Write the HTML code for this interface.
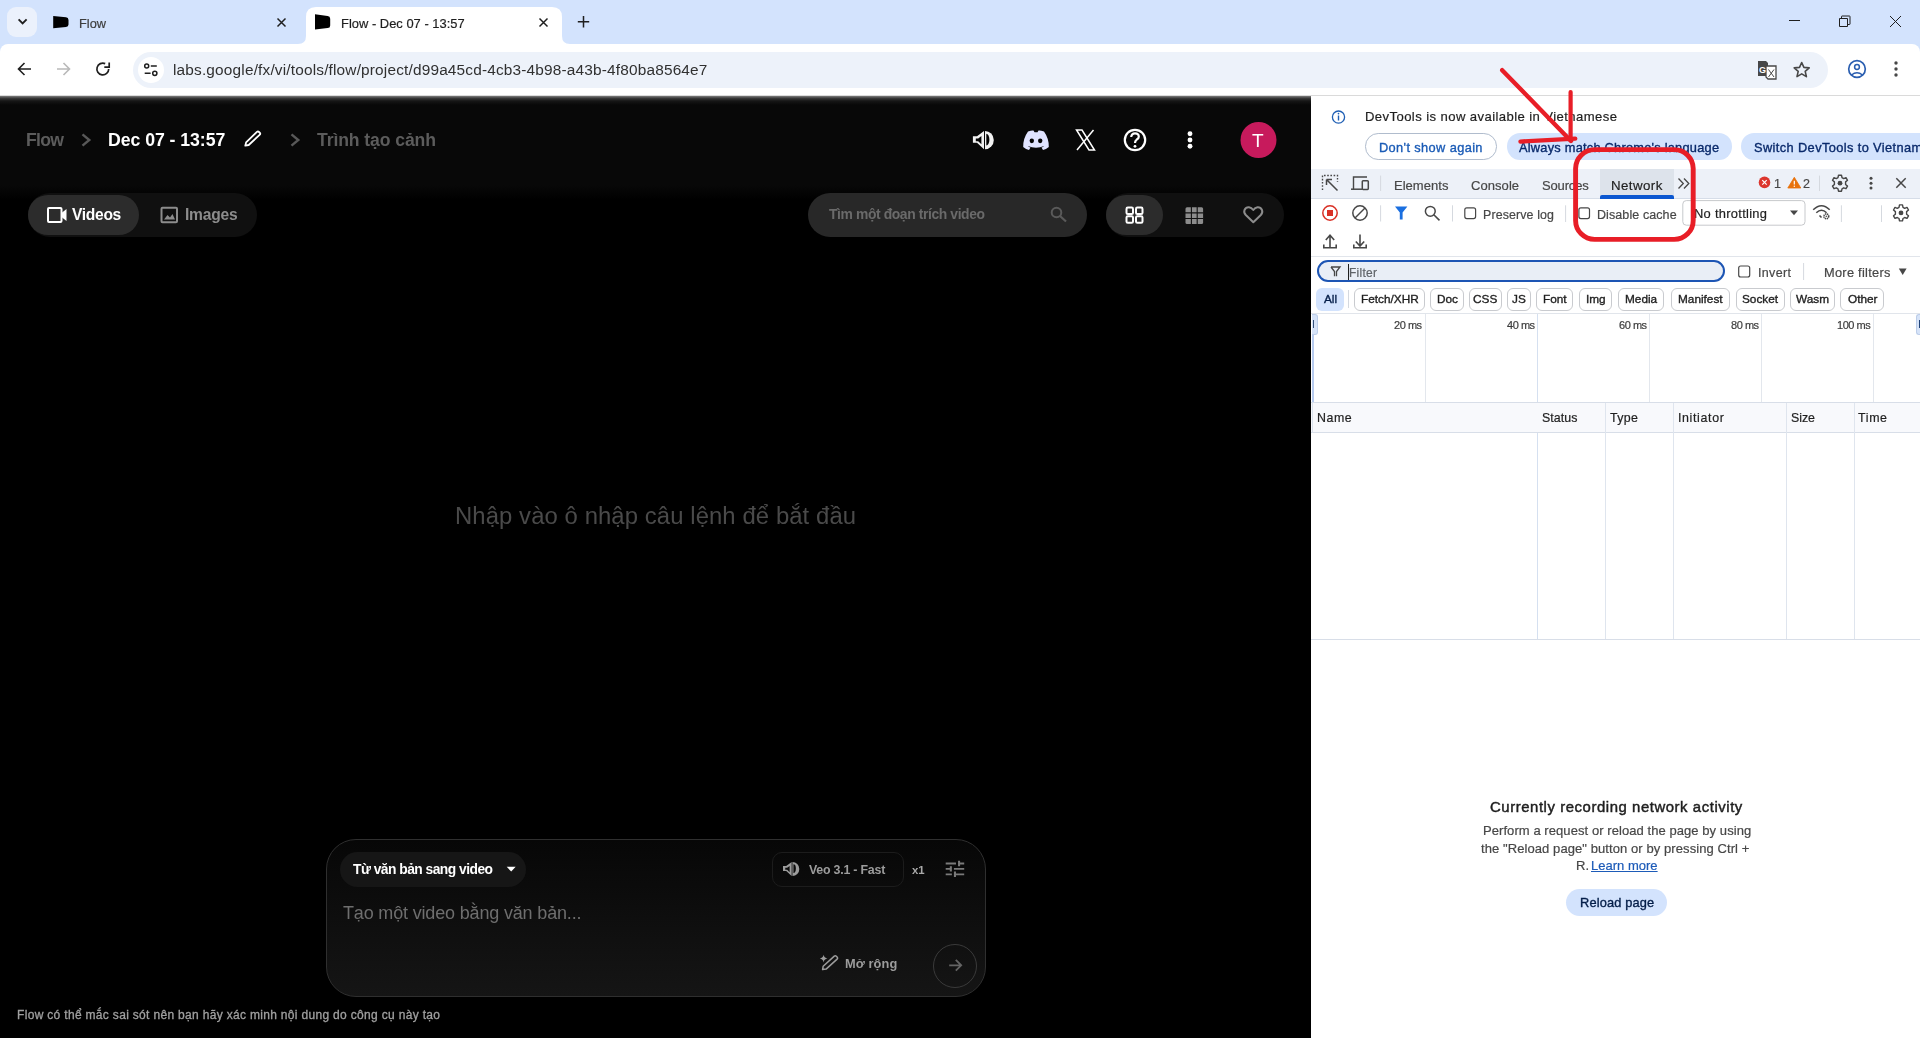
<!DOCTYPE html>
<html><head><meta charset="utf-8"><title>Flow</title>
<style>
html,body{margin:0;padding:0;}
body{width:1920px;height:1038px;overflow:hidden;position:relative;background:#d3e3fd;font-family:"Liberation Sans",sans-serif;}
.a{position:absolute;box-sizing:border-box;}
.t{will-change:transform;position:absolute;white-space:nowrap;line-height:1;font-family:"Liberation Sans",sans-serif;}
svg{position:absolute;overflow:visible;}

</style></head><body>
<!-- ===== tab strip ===== -->
<div class="a" style="left:7px;top:7px;width:30px;height:30px;border-radius:9px;background:#ebf1fc"></div>
<svg style="left:0;top:0" width="1920" height="44">
  <path d="M18.6 19.3 L22.6 23.3 L26.6 19.3" fill="none" stroke="#1f1f1f" stroke-width="1.9"/>
  <!-- inactive favicon -->
  <path d="M53.2 15.9 L66 17.2 Q68.5 17.5 68.5 20 L68.5 24.6 Q68.5 26.7 66 26.9 L53.2 28.2 Z" fill="#000" style="filter:blur(0.55px)"/>
  <path d="M277.5 18.5 L285.5 26.5 M285.5 18.5 L277.5 26.5" stroke="#1f1f1f" stroke-width="1.5"/>
  <!-- active tab -->
  <path d="M298 44 Q306 44 306 36 L306 17 Q306 7 316 7 L552 7 Q562 7 562 17 L562 36 Q562 44 570 44 Z" fill="#fff"/>
  <path d="M315 14.3 L327.6 15.9 Q330.2 16.2 330.2 18.7 L330.2 25.4 Q330.2 27.9 327.6 28.1 L315 29.6 Z" fill="#000" style="filter:blur(0.55px)"/>
  <path d="M539.5 18.5 L547.5 26.5 M547.5 18.5 L539.5 26.5" stroke="#1f1f1f" stroke-width="1.5"/>
  <path d="M583.5 16 L583.5 27.5 M577.8 21.8 L589.2 21.8" stroke="#1f1f1f" stroke-width="1.5"/>
  <!-- window controls -->
  <path d="M1789 20.5 L1800 20.5" stroke="#1f1f1f" stroke-width="1"/>
  <path d="M1839.5 18.5 L1847.5 18.5 L1847.5 26.5 L1839.5 26.5 Z M1841.5 18.5 L1841.5 16.5 Q1841.5 16 1842 16 L1849.5 16 Q1850 16 1850 16.5 L1850 24 Q1850 24.5 1849.5 24.5 L1847.5 24.5" fill="none" stroke="#1f1f1f" stroke-width="1"/>
  <path d="M1890 16 L1901 27 M1901 16 L1890 27" stroke="#1f1f1f" stroke-width="1"/>
</svg>
<!-- ===== toolbar ===== -->
<div class="a" style="left:0;top:44px;width:1920px;height:52px;background:#fff;border-radius:8px 8px 0 0;border-bottom:1px solid #dcdcdc"></div>
<div class="a" style="left:133px;top:52px;width:1695px;height:36px;border-radius:18px;background:#edf2fa"></div>
<div class="a" style="left:138px;top:57px;width:26px;height:26px;border-radius:13px;background:#fff"></div>
<svg style="left:0;top:44px" width="1920" height="52">
  <!-- back -->
  <path d="M31 25 L18.5 25 M24.5 19 L18.5 25 L24.5 31" fill="none" stroke="#1f1f1f" stroke-width="1.6"/>
  <path d="M57 25 L69.5 25 M63.5 19 L69.5 25 L63.5 31" fill="none" stroke="#b9b9b9" stroke-width="1.6"/>
  <!-- reload -->
  <path d="M108.7 25 A5.9 5.9 0 1 1 105.2 19.6" fill="none" stroke="#1f1f1f" stroke-width="1.7"/>
  <path d="M104.3 23.2 L109.2 23.2 L109.2 18.4" fill="none" stroke="#1f1f1f" stroke-width="1.7"/>
  <!-- tune icon -->
  <circle cx="146.7" cy="22" r="2" fill="none" stroke="#1f1f1f" stroke-width="1.5"/>
  <path d="M150.8 22.1 L156.8 22.1 M144.7 29.3 L150.6 29.3" stroke="#1f1f1f" stroke-width="1.5"/>
  <circle cx="154.8" cy="29.3" r="2.1" fill="none" stroke="#1f1f1f" stroke-width="1.5"/>
  <!-- translate -->
  <path d="M1758 17 L1766 17 L1768 19 L1768 32 L1758 32 Z" fill="#474747"/>
  <path d="M1766 22 L1776 22 L1776 35 L1768 35 L1766 33 Z" fill="#fff" stroke="#474747" stroke-width="1.3"/>
  <text x="1759" y="29" font-family="Liberation Sans" font-weight="700" font-size="9" fill="#fff">G</text>
  <path d="M1768.5 25.5 L1774 33 M1774 25.5 L1768.5 33" stroke="#474747" stroke-width="1"/>
  <!-- star -->
  <path d="M1801.7 18.5 L1803.9 23.4 L1809.2 23.9 L1805.2 27.4 L1806.4 32.6 L1801.7 29.9 L1797 32.6 L1798.2 27.4 L1794.2 23.9 L1799.5 23.4 Z" fill="none" stroke="#474747" stroke-width="1.6" stroke-linejoin="round"/>
  <!-- profile -->
  <circle cx="1857" cy="25" r="8.3" fill="none" stroke="#2a5eb0" stroke-width="1.7"/>
  <circle cx="1857" cy="23" r="2.4" fill="none" stroke="#2a5eb0" stroke-width="1.5"/>
  <path d="M1851.5 31 Q1857 26.5 1862.5 31" fill="none" stroke="#2a5eb0" stroke-width="1.5"/>
  <!-- kebab -->
  <circle cx="1896" cy="19" r="1.7" fill="#474747"/><circle cx="1896" cy="25" r="1.7" fill="#474747"/><circle cx="1896" cy="31" r="1.7" fill="#474747"/>
</svg>

<!-- ===== Flow page ===== -->
<div class="a" style="left:0;top:96px;width:1311px;height:942px;background:#000"></div>
<div class="a" style="left:0;top:96px;width:1311px;height:104px;background:linear-gradient(#080808 0,#080808 89px,#000 104px)"></div>
<div class="a" style="left:0;top:96px;width:1311px;height:9px;background:linear-gradient(#7c7c7c 0%,#3a3a3a 25%,#161616 55%,#080808 100%)"></div>

<svg style="left:0;top:0" width="1311" height="1038">
  <!-- breadcrumb chevrons -->
  <path d="M82.5 134.3 L89.3 140 L82.5 145.7" fill="none" stroke="#585858" stroke-width="2.4"/>
  <path d="M291.5 134.3 L298.3 140 L291.5 145.7" fill="none" stroke="#585858" stroke-width="2.4"/>
  <!-- pencil -->
  <path d="M245.3 145.7 L246.1 142.4 L256.9 131.9 Q258 131 259 132 L259.9 132.9 Q260.7 133.9 259.6 134.8 L248.7 145 Z" fill="none" stroke="#fff" stroke-width="1.8" stroke-linejoin="round"/>
  <!-- speaker -->
  <path d="M972.9 136.3 L977 136.3 L984 130.9 L984 149.2 L977 142.8 L972.9 142.8 Z" fill="#f2f2f2"/>
  <path d="M975.8 138.6 L978.2 138.6 L981.4 136 L981.4 144.2 L978.2 141.2 L975.8 141.2 Z" fill="#050505"/>
  <path d="M985 130.9 A8.8 9.2 0 0 1 985 149.3 Z" fill="#f2f2f2"/>
  <path d="M986.3 133.7 A3.1 5.85 0 0 1 986.3 145.4 Z" fill="#050505"/>
  <!-- discord -->
  <path d="M1028 131.5 Q1032 130 1033.5 130.5 L1034.5 132.3 Q1036 132 1037.5 132.3 L1038.5 130.5 Q1040 130 1044 131.5 Q1049 138.5 1048.8 147 Q1046 149.5 1043 150 L1041.5 147.5 Q1043 147 1044.2 146 Q1036 149.6 1027.8 146 Q1029 147 1030.5 147.5 L1029 150 Q1026 149.5 1023.2 147 Q1023 138.5 1028 131.5 Z" fill="#e0e3ff"/>
  <ellipse cx="1031.8" cy="140.8" rx="2.2" ry="2.4" fill="#050505"/>
  <ellipse cx="1040.2" cy="140.8" rx="2.2" ry="2.4" fill="#050505"/>
  <!-- X logo -->
  <path d="M1076.5 130 L1082 130 L1094.5 150 L1089 150 Z" fill="none" stroke="#fff" stroke-width="1.5"/>
  <path d="M1093.5 130 L1077 150" stroke="#fff" stroke-width="1.5"/>
  <!-- help -->
  <circle cx="1135" cy="140" r="10.2" fill="none" stroke="#fff" stroke-width="2.2"/>
  <path d="M1131.2 137 Q1131.5 133.3 1135 133.3 Q1138.8 133.3 1138.8 136.7 Q1138.8 138.5 1136.5 139.8 Q1135 140.8 1135 143" fill="none" stroke="#fff" stroke-width="2.2"/>
  <circle cx="1135" cy="146.3" r="1.4" fill="#fff"/>
  <!-- kebab -->
  <circle cx="1190" cy="133.8" r="2.45" fill="#fff"/><circle cx="1190" cy="140" r="2.45" fill="#fff"/><circle cx="1190" cy="146.2" r="2.45" fill="#fff"/>
  <!-- avatar -->
  <circle cx="1258.5" cy="140" r="18" fill="#c71a5c"/>
</svg>

<!-- tab group -->
<div class="a" style="left:27.5px;top:193px;width:229px;height:44px;border-radius:22px;background:#101010"></div>
<div class="a" style="left:28px;top:195px;width:111px;height:40px;border-radius:20px;background:#2c2c2c"></div>
<!-- search -->
<div class="a" style="left:808px;top:193px;width:279px;height:44px;border-radius:22px;background:#282828"></div>
<!-- view toggle -->
<div class="a" style="left:1105.5px;top:193px;width:178.5px;height:44px;border-radius:22px;background:#101010"></div>
<div class="a" style="left:1105.5px;top:195px;width:57.5px;height:40px;border-radius:20px;background:#2c2c2c"></div>

<svg style="left:0;top:0" width="1311" height="1038">
  <!-- video icon -->
  <rect x="48" y="208" width="13.5" height="14" rx="1" fill="none" stroke="#fff" stroke-width="2"/>
  <path d="M61.5 213 L66.5 209 L66.5 221 L61.5 217 Z" fill="#fff"/>
  <!-- image icon -->
  <rect x="161.5" y="207.7" width="15.5" height="14.5" rx="1" fill="none" stroke="#8c8c8c" stroke-width="2"/>
  <path d="M164 219.5 L167.5 215 L170 217.5 L172.5 214 L175 219.5 Z" fill="#8c8c8c"/>
  <!-- search icon -->
  <circle cx="1056.5" cy="212.5" r="4.8" fill="none" stroke="#5a5a5a" stroke-width="2"/>
  <path d="M1060 216 L1066 221.5" stroke="#5a5a5a" stroke-width="2.2"/>
  <!-- 2x2 grid -->
  <rect x="1126.5" y="207.6" width="6.5" height="6.5" rx="1.3" fill="none" stroke="#fff" stroke-width="2"/>
  <rect x="1136" y="207.6" width="6.5" height="6.5" rx="1.3" fill="none" stroke="#fff" stroke-width="2"/>
  <rect x="1126.5" y="216.3" width="6.5" height="6.5" rx="1.3" fill="none" stroke="#fff" stroke-width="2"/>
  <rect x="1136" y="216.3" width="6.5" height="6.5" rx="1.3" fill="none" stroke="#fff" stroke-width="2"/>
  <!-- 3x3 grid -->
  <rect x="1185.5" y="207.3" width="17.6" height="16.6" rx="1.5" fill="#8c8c8c"/>
  <path d="M1191.4 207 L1191.4 224.2 M1197.2 207 L1197.2 224.2 M1185 212.9 L1203.5 212.9 M1185 218.5 L1203.5 218.5" stroke="#101010" stroke-width="1.1"/>
  <!-- heart -->
  <path d="M1253.3 222.3 L1245.8 215 Q1243.5 212.5 1244.5 210 Q1246 207 1249 207.3 Q1251.5 207.6 1253.3 210 Q1255 207.6 1257.5 207.3 Q1260.5 207 1262 210 Q1263 212.5 1260.8 215 Z" fill="none" stroke="#8c8c8c" stroke-width="2" stroke-linejoin="round"/>
</svg>

<!-- prompt box -->
<div class="a" style="left:326px;top:839px;width:660px;height:158px;border-radius:30px;border:1px solid #2f2f2f;background:linear-gradient(#070707,#151515)"></div>
<div class="a" style="left:339.5px;top:852px;width:186px;height:35px;border-radius:17.5px;background:#161616"></div>
<div class="a" style="left:772px;top:852px;width:132px;height:34.5px;border-radius:10px;border:1px solid #1c1c1c;background:transparent"></div>
<div class="a" style="left:933px;top:944px;width:44px;height:44px;border-radius:22px;border:1px solid #3a3a3a"></div>
<svg style="left:0;top:0" width="1311" height="1038">
  <path d="M506.7 866.8 L515.7 866.8 L511.2 871.5 Z" fill="#fff"/>
  <!-- speaker small -->
  <g transform="translate(783,862) scale(0.78,0.762)">
    <path d="M0 5.4 L4.1 5.4 L11.1 0 L11.1 18.3 L4.1 11.9 L0 11.9 Z" fill="#9c9c9c"/>
    <path d="M2.9 7.7 L5.3 7.7 L8.5 5.1 L8.5 13.3 L5.3 10.3 L2.9 10.3 Z" fill="#0c0c0c"/>
    <path d="M12.1 0 A8.8 9.2 0 0 1 12.1 18.4 Z" fill="#9c9c9c"/>
    <path d="M13.4 2.8 A3.1 5.85 0 0 1 13.4 14.5 Z" fill="#0c0c0c"/>
  </g>
  <!-- sliders (tune) -->
  <g transform="translate(945.7,860.8) scale(1.028,0.9) translate(-3,-3)" fill="#7a7a7a">
    <path d="M3 17v2h6v-2H3zM3 5v2h10V5H3zm10 16v-2h8v-2h-8v-2h-2v6h2zM7 9v2H3v2h4v2h2V9H7zm14 4v-2H11v2h10zm-6-4h2V7h4V5h-4V3h-2v6z"/>
  </g>
  <!-- wand -->
  <path d="M822.6 969.6 L823.2 966.2 L834.3 956.1 Q835.4 955.3 836.3 956.2 L837.3 957.2 Q838.1 958.2 837.1 959.1 L826.1 969.1 Z" fill="none" stroke="#9c9c9c" stroke-width="1.5" stroke-linejoin="round"/>
  <path d="M823.6 954.8 Q824.2 958 827.4 958.6 Q824.2 959.2 823.6 962.4 Q823 959.2 819.8 958.6 Q823 958 823.6 954.8 Z" fill="#9c9c9c"/>
  <!-- send arrow -->
  <path d="M949.2 965.3 L961.2 965.3 M955.8 959.9 L961.2 965.3 L955.8 970.7" fill="none" stroke="#646464" stroke-width="1.8"/>
</svg>

<!-- ===== DevTools ===== -->
<div class="a" style="left:1311px;top:95px;width:609px;height:943px;background:#fff;border-top:1px solid #dadada"></div>
<!-- infobar -->
<div class="a" style="left:1365px;top:133.3px;width:131.5px;height:26.4px;border-radius:13.2px;border:1px solid #b0bccd"></div>
<div class="a" style="left:1506.5px;top:133.3px;width:225.2px;height:26.4px;border-radius:13.2px;background:#d3e3fd"></div>
<div class="a" style="left:1741.3px;top:133.3px;width:230px;height:26.4px;border-radius:13.2px;background:#d3e3fd"></div>
<!-- tab bar -->
<div class="a" style="left:1311px;top:169.2px;width:609px;height:29.5px;background:#edf1f8;border-bottom:1px solid #d6dde8"></div>
<div class="a" style="left:1600.2px;top:169.2px;width:73.5px;height:28.5px;background:#dde3eb"></div>
<div class="a" style="left:1600.2px;top:195.4px;width:73.5px;height:3.2px;background:#0b57d0;border-radius:2px 2px 0 0"></div>
<!-- third row bottom line, filter bar bottom line, timeline bottom -->
<div class="a" style="left:1311px;top:256px;width:609px;height:1px;background:#e1e5eb"></div>
<div class="a" style="left:1311px;top:313px;width:609px;height:1px;background:#e1e5eb"></div>
<!-- filter input -->
<div class="a" style="left:1317px;top:260.2px;width:407.5px;height:21.6px;border-radius:11px;border:2px solid #1d55b4;background:#e9eef6"></div>
<div class="a" style="left:1348px;top:263.5px;width:1px;height:16.5px;background:#1f1f1f"></div>
<!-- chips -->
<div class="a" style="left:1316.25px;top:288.3px;width:27.7px;height:22.4px;border-radius:6px;background:#d3e3fd"></div>
<div class="a" style="left:1348px;top:290px;width:1px;height:17.6px;background:#d5d9df"></div>
<div class="a" style="left:1354.3px;top:288.3px;width:70.3px;height:22.4px;border-radius:6px;border:1px solid #c9cbcf"></div>
<div class="a" style="left:1430px;top:288.3px;width:34.4px;height:22.4px;border-radius:6px;border:1px solid #c9cbcf"></div>
<div class="a" style="left:1469.2px;top:288.3px;width:32.7px;height:22.4px;border-radius:6px;border:1px solid #c9cbcf"></div>
<div class="a" style="left:1507.1px;top:288.3px;width:24.4px;height:22.4px;border-radius:6px;border:1px solid #c9cbcf"></div>
<div class="a" style="left:1536.4px;top:288.3px;width:36.9px;height:22.4px;border-radius:6px;border:1px solid #c9cbcf"></div>
<div class="a" style="left:1579.3px;top:288.3px;width:33.2px;height:22.4px;border-radius:6px;border:1px solid #c9cbcf"></div>
<div class="a" style="left:1618.3px;top:288.3px;width:46.1px;height:22.4px;border-radius:6px;border:1px solid #c9cbcf"></div>
<div class="a" style="left:1670.5px;top:288.3px;width:59.8px;height:22.4px;border-radius:6px;border:1px solid #c9cbcf"></div>
<div class="a" style="left:1735.5px;top:288.3px;width:49px;height:22.4px;border-radius:6px;border:1px solid #c9cbcf"></div>
<div class="a" style="left:1789.5px;top:288.3px;width:45.7px;height:22.4px;border-radius:6px;border:1px solid #c9cbcf"></div>
<div class="a" style="left:1840.4px;top:288.3px;width:43.9px;height:22.4px;border-radius:6px;border:1px solid #c9cbcf"></div>
<!-- timeline grid -->
<div class="a" style="left:1424.5px;top:314px;width:1px;height:88px;background:#e3e7ed"></div>
<div class="a" style="left:1649px;top:314px;width:1px;height:88px;background:#e3e7ed"></div>
<div class="a" style="left:1761px;top:314px;width:1px;height:88px;background:#e3e7ed"></div>
<div class="a" style="left:1873.3px;top:314px;width:1px;height:88px;background:#e3e7ed"></div>
<div class="a" style="left:1537px;top:314px;width:1.3px;height:325px;background:#d5e0f0"></div>
<div class="a" style="left:1312.2px;top:314.3px;width:5.6px;height:20.4px;border-radius:0 3px 3px 0;background:#d6e3f8;border:1px solid #bccde9;border-left:none"></div>
<div class="a" style="left:1313px;top:320.2px;width:1.2px;height:8px;background:#34507a"></div>
<div class="a" style="left:1312.2px;top:334.7px;width:1.6px;height:67.5px;background:#b7cbef"></div>
<div class="a" style="left:1916.2px;top:314.4px;width:5px;height:20.4px;border-radius:3px 0 0 3px;background:#d6e3f8;border:1px solid #bccde9;border-right:none"></div>
<div class="a" style="left:1919px;top:320.2px;width:1.3px;height:8px;background:#23457a"></div>
<div class="a" style="left:1311px;top:402px;width:609px;height:1px;background:#d8dee8"></div>
<!-- table header -->
<div class="a" style="left:1311px;top:403px;width:609px;height:29.5px;background:#f8f9fc;border-bottom:1px solid #d8dee8"></div>
<div class="a" style="left:1312px;top:403px;width:1px;height:30px;background:#dbe2ec"></div>
<div class="a" style="left:1605px;top:403px;width:1px;height:236px;background:#dfe5ee"></div>
<div class="a" style="left:1672.7px;top:403px;width:1px;height:236px;background:#dfe5ee"></div>
<div class="a" style="left:1786px;top:403px;width:1px;height:236px;background:#dfe5ee"></div>
<div class="a" style="left:1854px;top:403px;width:1px;height:236px;background:#dfe5ee"></div>
<div class="a" style="left:1311px;top:638.5px;width:609px;height:1px;background:#d8dee8"></div>
<!-- reload button -->
<div class="a" style="left:1566px;top:889.1px;width:101px;height:27px;border-radius:13.5px;background:#d3e3fd"></div>

<svg style="left:0;top:0" width="1920" height="1038">
  <!-- info icon -->
  <circle cx="1338.5" cy="117.1" r="6.1" fill="none" stroke="#1f5fb4" stroke-width="1.3"/>
  <path d="M1338.5 115.5 L1338.5 120.5" stroke="#1f5fb4" stroke-width="1.4"/>
  <circle cx="1338.5" cy="113.6" r="0.85" fill="#1f5fb4"/>
  <!-- inspect -->
  <path d="M1322.5 190 L1322.5 175.5 L1337.5 175.5 L1337.5 182" fill="none" stroke="#474747" stroke-width="1.4" stroke-dasharray="1.6 1.6"/>
  <path d="M1326.5 179.5 L1337.5 190.5 M1326.5 179.5 L1326.5 185 M1326.5 179.5 L1332 179.5" fill="none" stroke="#474747" stroke-width="1.5"/>
  <!-- device -->
  <path d="M1353.5 189.5 L1353.5 177 L1367 177" fill="none" stroke="#474747" stroke-width="1.4"/>
  <path d="M1351 189.2 L1362 189.2" stroke="#474747" stroke-width="1.5"/>
  <rect x="1362.3" y="180.8" width="6" height="8.6" rx="0.8" fill="none" stroke="#474747" stroke-width="1.5"/>
  <path d="M1380.6 175.6 L1380.6 191" stroke="#d5d9df" stroke-width="1"/>
  <!-- >> -->
  <path d="M1678.5 178.5 L1683.3 183.5 L1678.5 188.5 M1684 178.5 L1688.8 183.5 L1684 188.5" fill="none" stroke="#474747" stroke-width="1.3"/>
  <!-- error -->
  <circle cx="1764.5" cy="182.4" r="5.8" fill="#dc362e"/>
  <path d="M1762.3 180.2 L1766.7 184.6 M1766.7 180.2 L1762.3 184.6" stroke="#fff" stroke-width="1.2"/>
  <!-- warning -->
  <path d="M1794.3 177.3 L1800.8 188 L1787.8 188 Z" fill="#e8710a" stroke="#e8710a" stroke-width="0.8" stroke-linejoin="round"/>
  <path d="M1794.3 180.8 L1794.3 184.6" stroke="#fff" stroke-width="1.2"/>
  <circle cx="1794.3" cy="186.3" r="0.7" fill="#fff"/>
  <path d="M1819.5 175.6 L1819.5 191" stroke="#d5d9df" stroke-width="1"/>
  <!-- gear -->
  <g transform="translate(1840,183.2)">
    <path d="M-1.5 -8 L1.5 -8 L2 -5.6 L3.7 -4.6 L6 -5.5 L7.5 -2.9 L5.6 -1.3 L5.6 1.3 L7.5 2.9 L6 5.5 L3.7 4.6 L2 5.6 L1.5 8 L-1.5 8 L-2 5.6 L-3.7 4.6 L-6 5.5 L-7.5 2.9 L-5.6 1.3 L-5.6 -1.3 L-7.5 -2.9 L-6 -5.5 L-3.7 -4.6 L-2 -5.6 Z" fill="none" stroke="#474747" stroke-width="1.4" stroke-linejoin="round"/>
    <circle r="2.4" fill="#474747"/>
  </g>
  <!-- kebab -->
  <circle cx="1871" cy="178.3" r="1.5" fill="#474747"/><circle cx="1871" cy="183.2" r="1.5" fill="#474747"/><circle cx="1871" cy="188.1" r="1.5" fill="#474747"/>
  <!-- close -->
  <path d="M1896.3 178.3 L1905.7 187.7 M1905.7 178.3 L1896.3 187.7" stroke="#474747" stroke-width="1.5"/>

  <!-- record -->
  <circle cx="1330" cy="213" r="7.2" fill="none" stroke="#d93025" stroke-width="1.5"/>
  <rect x="1327" y="210" width="6" height="6" fill="#d93025"/>
  <!-- clear -->
  <circle cx="1360" cy="213" r="7.2" fill="none" stroke="#474747" stroke-width="1.5"/>
  <path d="M1355 218 L1365 208" stroke="#474747" stroke-width="1.5"/>
  <path d="M1380.6 205.3 L1380.6 221.5" stroke="#d5d9df" stroke-width="1"/>
  <!-- funnel -->
  <path d="M1395 206.6 L1407.4 206.6 L1402.6 212.6 L1402.6 219.6 L1399.8 219.6 L1399.8 212.6 Z" fill="#1a6fe0"/>
  <!-- search -->
  <circle cx="1430.3" cy="211.3" r="4.9" fill="none" stroke="#474747" stroke-width="1.5"/>
  <path d="M1433.8 214.8 L1439.5 220.4" stroke="#474747" stroke-width="1.6"/>
  <path d="M1452.5 205.3 L1452.5 221.5" stroke="#d5d9df" stroke-width="1"/>
  <rect x="1464.8" y="207.8" width="10.8" height="10.8" rx="2" fill="none" stroke="#474747" stroke-width="1.2"/>
  <path d="M1565.6 205.3 L1565.6 222" stroke="#d5d9df" stroke-width="1"/>
  <rect x="1578.9" y="207.8" width="10.6" height="10.8" rx="2" fill="none" stroke="#474747" stroke-width="1.2"/>
  <!-- throttle select -->
  <rect x="1682.8" y="200.6" width="122.2" height="24.6" rx="3.5" fill="none" stroke="#c7c9cc" stroke-width="1"/>
  <path d="M1790 210.6 L1798 210.6 L1794 215.3 Z" fill="#474747"/>
  <!-- wifi gear -->
  <path d="M1813.2 209.8 Q1821.5 201.5 1829.7 209.8" fill="none" stroke="#474747" stroke-width="1.5"/>
  <path d="M1816.3 212.8 Q1821.5 207.6 1826.6 212.8" fill="none" stroke="#474747" stroke-width="1.5"/>
  <path d="M1819.5 215.5 L1821.5 217.5" stroke="#474747" stroke-width="1.6"/>
  <g transform="translate(1826.3,216.3)"><circle r="2.4" fill="none" stroke="#474747" stroke-width="1.6" stroke-dasharray="1.2 0.6"/><circle r="0.8" fill="#474747"/></g>
  <path d="M1841.4 205.3 L1841.4 222" stroke="#d5d9df" stroke-width="1"/>
  <path d="M1881.5 205.3 L1881.5 222" stroke="#d5d9df" stroke-width="1"/>
  <g transform="translate(1901,212.9)">
    <path d="M-1.5 -8 L1.5 -8 L2 -5.6 L3.7 -4.6 L6 -5.5 L7.5 -2.9 L5.6 -1.3 L5.6 1.3 L7.5 2.9 L6 5.5 L3.7 4.6 L2 5.6 L1.5 8 L-1.5 8 L-2 5.6 L-3.7 4.6 L-6 5.5 L-7.5 2.9 L-5.6 1.3 L-5.6 -1.3 L-7.5 -2.9 L-6 -5.5 L-3.7 -4.6 L-2 -5.6 Z" fill="none" stroke="#474747" stroke-width="1.4" stroke-linejoin="round"/>
    <circle r="2.4" fill="#474747"/>
  </g>
  <!-- upload / download -->
  <path d="M1330 247 L1330 236 M1325.8 240 L1330 235.3 L1334.2 240" fill="none" stroke="#474747" stroke-width="1.6"/>
  <path d="M1323.8 244.5 L1323.8 247.8 L1336.2 247.8 L1336.2 244.5" fill="none" stroke="#474747" stroke-width="1.6"/>
  <path d="M1360 234.5 L1360 245.5 M1355.8 241.5 L1360 246 L1364.2 241.5" fill="none" stroke="#474747" stroke-width="1.6"/>
  <path d="M1353.8 244.5 L1353.8 247.8 L1366.2 247.8 L1366.2 244.5" fill="none" stroke="#474747" stroke-width="1.6"/>
  <!-- filter funnel outline -->
  <path d="M1331 267 L1340 267 L1336.5 271.5 L1336.5 276.3 M1331 267 L1334.5 271.5 L1334.5 276.3" fill="none" stroke="#474747" stroke-width="1.3"/>
  <!-- invert checkbox -->
  <rect x="1738.7" y="266" width="11" height="11" rx="2" fill="none" stroke="#474747" stroke-width="1.2"/>
  <path d="M1803.6 263 L1803.6 280" stroke="#d5d9df" stroke-width="1"/>
  <path d="M1898.8 268.5 L1906.6 268.5 L1902.7 275 Z" fill="#474747"/>
</svg>

<div class="t" style="left:79.20px;top:17.66px;font-size:12.8px;font-weight:400;color:#3c3c3c;letter-spacing:-0.010px;-webkit-text-stroke:0.2px currentColor;">Flow</div>
<div class="t" style="left:340.50px;top:17.58px;font-size:12.9px;font-weight:400;color:#1f1f1f;letter-spacing:0.023px;-webkit-text-stroke:0.2px currentColor;">Flow - Dec 07 - 13:57</div>
<div class="t" style="left:172.50px;top:62.46px;font-size:15.4px;font-weight:400;color:#303030;letter-spacing:0.173px;">labs.google/fx/vi/tools/flow/project/d99a45cd-4cb3-4b98-a43b-4f80ba8564e7</div>
<div class="t" style="left:25.90px;top:131.60px;font-size:17.6px;font-weight:700;color:#5c5c5c;letter-spacing:-0.693px;">Flow</div>
<div class="t" style="left:107.90px;top:131.51px;font-size:17.7px;font-weight:700;color:#ffffff;letter-spacing:-0.054px;">Dec 07 - 13:57</div>
<div class="t" style="left:317.20px;top:131.60px;font-size:17.6px;font-weight:700;color:#5c5c5c;letter-spacing:-0.096px;">Trình tạo cảnh</div>
<div class="t" style="left:71.70px;top:206.69px;font-size:15.6px;font-weight:700;color:#ffffff;letter-spacing:-0.312px;">Videos</div>
<div class="t" style="left:184.50px;top:206.69px;font-size:15.6px;font-weight:700;color:#8c8c8c;letter-spacing:-0.210px;">Images</div>
<div class="t" style="left:829.20px;top:207.73px;font-size:13.9px;font-weight:700;color:#6a6a6a;letter-spacing:-0.398px;">Tìm một đoạn trích video</div>
<div class="t" style="left:1251.50px;top:131.41px;font-size:19px;font-weight:400;color:#ffffff;">T</div>
<div class="t" style="left:454.50px;top:504.31px;font-size:23.85px;font-weight:400;color:#4a4a4a;letter-spacing:0.097px;">Nhập vào ô nhập câu lệnh để bắt đầu</div>
<div class="t" style="left:353.20px;top:863.02px;font-size:13.8px;font-weight:700;color:#ffffff;letter-spacing:-0.515px;">Từ văn bản sang video</div>
<div class="t" style="left:342.90px;top:904.46px;font-size:18px;font-weight:400;color:#6e6e6e;letter-spacing:-0.167px;">Tạo một video bằng văn bản...</div>
<div class="t" style="left:808.80px;top:864.00px;font-size:12.4px;font-weight:700;color:#9c9c9c;letter-spacing:-0.223px;">Veo 3.1 - Fast</div>
<div class="t" style="left:911.50px;top:864.85px;font-size:11.4px;font-weight:700;color:#a8a8a8;">x1</div>
<div class="t" style="left:845.20px;top:957.66px;font-size:12.8px;font-weight:700;color:#9c9c9c;letter-spacing:0.075px;">Mở rộng</div>
<div class="t" style="left:16.70px;top:1009.09px;font-size:12px;font-weight:400;color:#a0a0a0;letter-spacing:0.320px;-webkit-text-stroke:0.3px currentColor;">Flow có thể mắc sai sót nên bạn hãy xác minh nội dung do công cụ này tạo</div>
<div class="t" style="left:1364.60px;top:109.91px;font-size:13.1px;font-weight:400;color:#1f1f1f;letter-spacing:0.413px;-webkit-text-stroke:0.2px currentColor;">DevTools is now available in Vietnamese</div>
<div class="t" style="left:1378.70px;top:141.96px;font-size:12.8px;font-weight:400;color:#1a5bb6;letter-spacing:0.381px;-webkit-text-stroke:0.35px currentColor;">Don't show again</div>
<div class="t" style="left:1518.90px;top:141.96px;font-size:12.8px;font-weight:400;color:#0a2a6b;letter-spacing:0.239px;-webkit-text-stroke:0.35px currentColor;">Always match Chrome's language</div>
<div class="t" style="left:1753.90px;top:141.96px;font-size:12.8px;font-weight:400;color:#0a2a6b;letter-spacing:0.392px;-webkit-text-stroke:0.35px currentColor;">Switch DevTools to Vietnamese</div>
<div class="t" style="left:1394.10px;top:178.99px;font-size:13px;font-weight:400;color:#474747;letter-spacing:0.028px;-webkit-text-stroke:0.2px currentColor;">Elements</div>
<div class="t" style="left:1471.10px;top:178.99px;font-size:13px;font-weight:400;color:#474747;letter-spacing:0.066px;-webkit-text-stroke:0.2px currentColor;">Console</div>
<div class="t" style="left:1541.70px;top:178.99px;font-size:13px;font-weight:400;color:#474747;letter-spacing:-0.167px;-webkit-text-stroke:0.2px currentColor;">Sources</div>
<div class="t" style="left:1610.90px;top:179.44px;font-size:13.3px;font-weight:400;color:#1f1f1f;letter-spacing:0.420px;-webkit-text-stroke:0.2px currentColor;">Network</div>
<div class="t" style="left:1773.90px;top:177.92px;font-size:12.5px;font-weight:400;color:#474747;-webkit-text-stroke:0.2px currentColor;">1</div>
<div class="t" style="left:1803.10px;top:177.92px;font-size:12.5px;font-weight:400;color:#474747;-webkit-text-stroke:0.2px currentColor;">2</div>
<div class="t" style="left:1483.40px;top:208.60px;font-size:12.4px;font-weight:400;color:#474747;letter-spacing:0.131px;-webkit-text-stroke:0.2px currentColor;">Preserve log</div>
<div class="t" style="left:1596.60px;top:208.82px;font-size:12.5px;font-weight:400;color:#474747;letter-spacing:0.090px;-webkit-text-stroke:0.2px currentColor;">Disable cache</div>
<div class="t" style="left:1694.20px;top:208.48px;font-size:12.9px;font-weight:400;color:#1f1f1f;letter-spacing:0.290px;-webkit-text-stroke:0.2px currentColor;">No throttling</div>
<div class="t" style="left:1348.80px;top:267.24px;font-size:12px;font-weight:400;color:#5f6368;letter-spacing:0.266px;-webkit-text-stroke:0.2px currentColor;">Filter</div>
<div class="t" style="left:1757.60px;top:266.82px;font-size:12.5px;font-weight:400;color:#474747;letter-spacing:0.347px;-webkit-text-stroke:0.2px currentColor;">Invert</div>
<div class="t" style="left:1824.00px;top:266.56px;font-size:12.8px;font-weight:400;color:#474747;letter-spacing:0.282px;-webkit-text-stroke:0.2px currentColor;">More filters</div>
<div class="t" style="left:1323.51px;top:294.41px;font-size:11.8px;font-weight:400;color:#041e49;-webkit-text-stroke:0.35px currentColor;">All</div>
<div class="t" style="left:1360.60px;top:294.41px;font-size:11.8px;font-weight:400;color:#1f1f1f;-webkit-text-stroke:0.35px currentColor;">Fetch/XHR</div>
<div class="t" style="left:1436.71px;top:294.41px;font-size:11.8px;font-weight:400;color:#1f1f1f;-webkit-text-stroke:0.35px currentColor;">Doc</div>
<div class="t" style="left:1473.42px;top:294.41px;font-size:11.8px;font-weight:400;color:#1f1f1f;-webkit-text-stroke:0.35px currentColor;">CSS</div>
<div class="t" style="left:1512.41px;top:294.41px;font-size:11.8px;font-weight:400;color:#1f1f1f;-webkit-text-stroke:0.35px currentColor;">JS</div>
<div class="t" style="left:1543.05px;top:294.41px;font-size:11.8px;font-weight:400;color:#1f1f1f;-webkit-text-stroke:0.35px currentColor;">Font</div>
<div class="t" style="left:1586.06px;top:294.41px;font-size:11.8px;font-weight:400;color:#1f1f1f;-webkit-text-stroke:0.35px currentColor;">Img</div>
<div class="t" style="left:1625.28px;top:294.41px;font-size:11.8px;font-weight:400;color:#1f1f1f;-webkit-text-stroke:0.35px currentColor;">Media</div>
<div class="t" style="left:1678.10px;top:294.41px;font-size:11.8px;font-weight:400;color:#1f1f1f;-webkit-text-stroke:0.35px currentColor;">Manifest</div>
<div class="t" style="left:1741.96px;top:294.41px;font-size:11.8px;font-weight:400;color:#1f1f1f;-webkit-text-stroke:0.35px currentColor;">Socket</div>
<div class="t" style="left:1795.86px;top:294.41px;font-size:11.8px;font-weight:400;color:#1f1f1f;-webkit-text-stroke:0.35px currentColor;">Wasm</div>
<div class="t" style="left:1847.59px;top:294.41px;font-size:11.8px;font-weight:400;color:#1f1f1f;-webkit-text-stroke:0.35px currentColor;">Other</div>
<div class="t" style="left:1394.40px;top:319.59px;font-size:11px;font-weight:400;color:#3c3c3c;letter-spacing:-0.467px;-webkit-text-stroke:0.2px currentColor;">20 ms</div>
<div class="t" style="left:1506.70px;top:319.59px;font-size:11px;font-weight:400;color:#3c3c3c;letter-spacing:-0.467px;-webkit-text-stroke:0.2px currentColor;">40 ms</div>
<div class="t" style="left:1618.50px;top:319.59px;font-size:11px;font-weight:400;color:#3c3c3c;letter-spacing:-0.467px;-webkit-text-stroke:0.2px currentColor;">60 ms</div>
<div class="t" style="left:1730.70px;top:319.59px;font-size:11px;font-weight:400;color:#3c3c3c;letter-spacing:-0.467px;-webkit-text-stroke:0.2px currentColor;">80 ms</div>
<div class="t" style="left:1837.30px;top:319.59px;font-size:11px;font-weight:400;color:#3c3c3c;letter-spacing:-0.456px;-webkit-text-stroke:0.2px currentColor;">100 ms</div>
<div class="t" style="left:1317.20px;top:412.00px;font-size:12.4px;font-weight:400;color:#1f1f1f;letter-spacing:0.546px;-webkit-text-stroke:0.2px currentColor;">Name</div>
<div class="t" style="left:1542.00px;top:412.00px;font-size:12.4px;font-weight:400;color:#1f1f1f;letter-spacing:0.052px;-webkit-text-stroke:0.2px currentColor;">Status</div>
<div class="t" style="left:1609.80px;top:412.00px;font-size:12.4px;font-weight:400;color:#1f1f1f;letter-spacing:0.375px;-webkit-text-stroke:0.2px currentColor;">Type</div>
<div class="t" style="left:1677.60px;top:412.00px;font-size:12.4px;font-weight:400;color:#1f1f1f;letter-spacing:0.645px;-webkit-text-stroke:0.2px currentColor;">Initiator</div>
<div class="t" style="left:1790.50px;top:412.00px;font-size:12.4px;font-weight:400;color:#1f1f1f;letter-spacing:-0.036px;-webkit-text-stroke:0.2px currentColor;">Size</div>
<div class="t" style="left:1858.20px;top:412.00px;font-size:12.4px;font-weight:400;color:#1f1f1f;letter-spacing:0.641px;-webkit-text-stroke:0.2px currentColor;">Time</div>
<div class="t" style="left:1490.45px;top:800.13px;font-size:14.9px;font-weight:400;color:#1f1f1f;letter-spacing:0.564px;-webkit-text-stroke:0.45px currentColor;">Currently recording network activity</div>
<div class="t" style="left:1482.60px;top:824.19px;font-size:13px;font-weight:400;color:#474747;letter-spacing:0.068px;-webkit-text-stroke:0.2px currentColor;">Perform a request or reload the page by using</div>
<div class="t" style="left:1481.10px;top:841.69px;font-size:13px;font-weight:400;color:#474747;letter-spacing:0.082px;-webkit-text-stroke:0.2px currentColor;">the "Reload page" button or by pressing Ctrl +</div>
<div class="t" style="left:1575.70px;top:858.59px;font-size:13px;font-weight:400;color:#474747;-webkit-text-stroke:0.2px currentColor;">R.</div>
<div class="t" style="left:1590.70px;top:858.59px;font-size:13px;font-weight:400;color:#1d5bb8;letter-spacing:0.013px;-webkit-text-stroke:0.2px currentColor;text-decoration:underline;">Learn more</div>
<div class="t" style="left:1579.75px;top:897.26px;font-size:12.8px;font-weight:400;color:#041e49;letter-spacing:0.152px;-webkit-text-stroke:0.35px currentColor;">Reload page</div>
<svg style="left:0;top:0;position:absolute" width="1920" height="1038">
  <g fill="none" stroke="#e81e27" stroke-linecap="round" stroke-linejoin="round">
    <path d="M1502.2 70.2 L1571 141" stroke-width="4.4"/>
    <path d="M1570.6 92 L1570.6 140.5" stroke-width="4.2"/>
    <path d="M1520.5 141.6 L1575.2 138.6" stroke-width="4.4"/>
    <rect x="1575.6" y="149.6" width="117.6" height="89.8" rx="19" ry="19" stroke-width="4.9"/>
  </g>
</svg>

</body></html>
